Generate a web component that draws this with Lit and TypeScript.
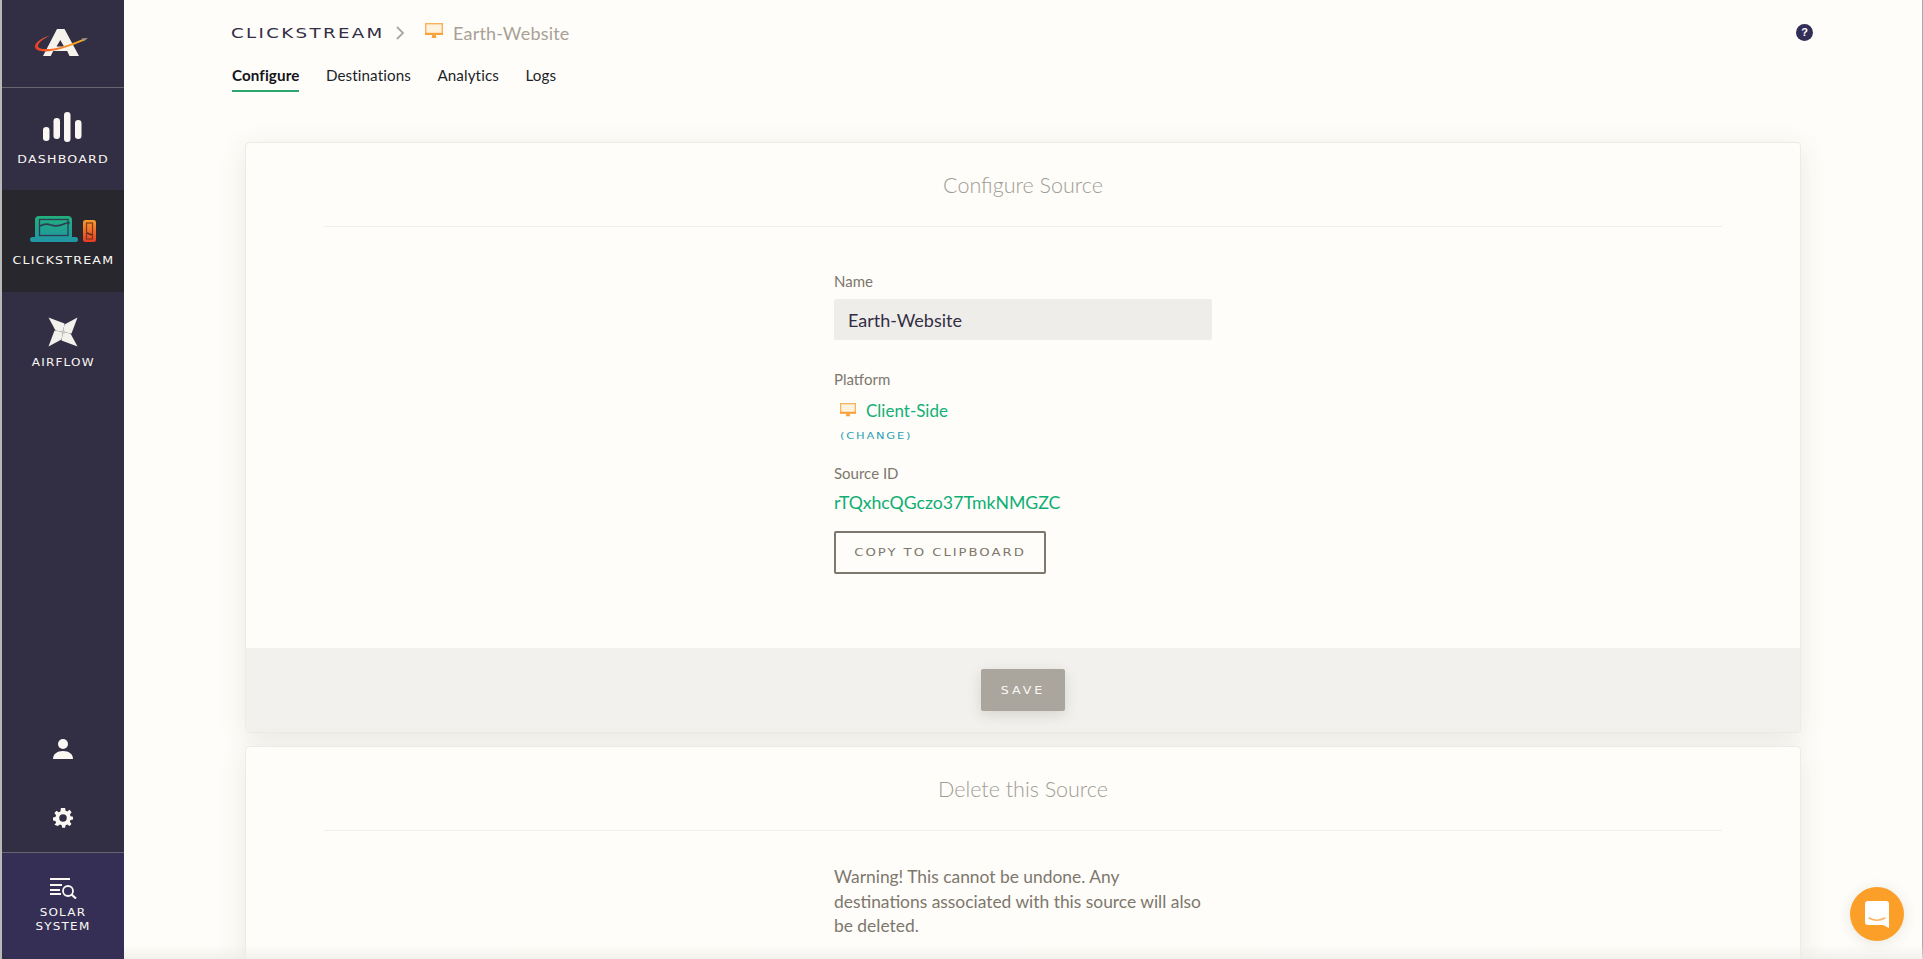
import { LitElement, html, css, svg } from 'lit';
import { customElement } from 'lit/decorators.js';

const monitor = (w: number) => html`<svg width=${w} viewBox="0 0 18 16" fill="none">
  <rect x="0.7" y="0.7" width="16.6" height="10.600" fill="#fff3df" stroke="#fbb05a" stroke-width="1.400"/>
  <rect x="0" y="9.800" width="18" height="2.200" fill="#f7a23b"/>
  <path d="M6.500 15h5l-1-3.500h-3z" fill="#f7a23b"/>
</svg>`;

// one pinwheel blade, drawn around the centre and rotated four times
const blade = (deg: number) =>
  svg`<path transform="translate(15 15) rotate(${deg})" d="M-14.500-14.500 1.500-8.500 0 0-7.500-1.500z" fill="#f3f1ec"/>`;

@customElement('app-root')
export class AppRoot extends LitElement {
  static styles = css`
    :host {
      display: block;
      height: 959px;
      overflow: hidden;
      position: relative;
      background: #fefdf9;
      font-family: "Lato", "Open Sans", sans-serif;
    }

    .page {
      display: flex;
      height: 959px;
      border-left: 2px solid #b9b9ba;
      border-right: 1px solid #a9a9a8;
    }

    .side {
      width: 122px;
      flex: none;
      display: flex;
      flex-direction: column;
      background: #322e44;
      color: #fbf8f4;
    }

    .logo {
      height: 87px;
      display: flex;
      align-items: center;
      justify-content: center;
      border-bottom: 1px solid #67656f;
    }

    .logo svg { margin-bottom: 2px; }

    .nav {
      height: 102px;
      display: flex;
      flex-direction: column;
      align-items: center;
      box-sizing: border-box;
    }

    .nav svg { display: block; }
    .nav.active { background: #29272e; padding-top: 26px; }
    .nav.dash { padding-top: 24px; }
    .nav.air { padding-top: 25px; }

    .cap {
      font-family: "DejaVu Sans", sans-serif;
      font-size: 10.5px;
      letter-spacing: 1px;
      line-height: 12px;
      text-align: center;
      color: #fbf8f4;
      transform: scaleX(1.2);
      margin-top: 11px;
    }

    .active .cap { margin-top: 12px; }
    .air .cap { margin-top: 10px; font-size: 10px; }

    .grow { flex: 1; }

    .small-icon {
      height: 69px;
      display: flex;
      align-items: center;
      justify-content: center;
    }

    .solar {
      height: 107px;
      background: #362f55;
      border-top: 1px solid #67656f;
      border-bottom-left-radius: 8px;
      display: flex;
      flex-direction: column;
      align-items: center;
      padding-top: 25px;
      box-sizing: border-box;
      gap: 7px;
    }

    .solar .cap {
      margin-top: 0;
      line-height: 14px;
      font-size: 10px;
    }

    .main {
      flex: 1;
      min-width: 0;
      padding: 0 121px;
    }

    .head {
      height: 142px;
      box-sizing: border-box;
      margin-left: -14px;
      margin-right: -12px;
      padding-top: 22px;
    }

    .crumbs {
      display: flex;
      align-items: center;
      height: 21px;
    }

    .crumb-root {
      font-family: "DejaVu Sans", sans-serif;
      font-size: 14px;
      letter-spacing: 1.8px;
      color: #322e44;
      width: 165px;
      white-space: nowrap;
      transform: scaleX(1.3);
      transform-origin: left;
      flex: none;
    }

    .crumb-icon { margin: 0 10px 0 20px; display: block; }

    .crumb-name {
      font-size: 18px;
      color: #a8a096;
      letter-spacing: 0.2px;
    }

    .help {
      margin-left: auto;
      width: 17px;
      height: 17px;
      border-radius: 50%;
      background: #322e57;
      color: #fff;
      font: bold 11px/17px "Liberation Sans", sans-serif;
      text-align: center;
    }

    .tabs {
      display: flex;
      gap: 26.5px;
      margin-top: 19px;
      margin-left: 1px;
      font-size: 15.2px;
      color: #211f2a;
    }

    .tab {
      height: 30px;
      line-height: 27px;
      box-sizing: border-box;
      letter-spacing: 0.1px;
    }

    .tab.on {
      font-weight: 700;
      color: #15141b;
      border-bottom: 2px solid #2aa76f;
    }

    .card {
      background: #fefdf9;
      border: 1px solid #ecebe6;
      border-radius: 4px;
      box-shadow: 0 6px 28px rgba(60, 55, 40, 0.1);
      margin-bottom: 13px;
    }

    .title {
      margin: 0 78px;
      height: 83px;
      border-bottom: 1px solid #f0efea;
      text-align: center;
      font-size: 21.5px;
      font-weight: 300;
      line-height: 84px;
      color: #a09c94;
    }

    .form {
      width: 378px;
      margin: 0 auto;
      padding-top: 44px;
      height: 421px;
      box-sizing: border-box;
    }

    .label {
      font-size: 15px;
      line-height: 20px;
      color: #7d776d;
    }

    .input {
      margin-top: 8px;
      height: 41px;
      border-radius: 2px;
      background: #efedea;
      color: #322e44;
      font-size: 18px;
      line-height: 42px;
      padding-left: 14px;
    }

    .platform { margin-top: 29px; }

    .client {
      display: flex;
      align-items: center;
      gap: 10px;
      margin: 10px 0 0 6px;
      height: 22px;
      font-size: 17px;
      color: #12b076;
    }

    .change {
      margin: 9px 0 0 6px;
      font-family: "DejaVu Sans", sans-serif;
      font-size: 9.5px;
      letter-spacing: 1.5px;
      line-height: 12px;
      color: #2a9fb4;
      transform: scaleX(1.2);
      transform-origin: left;
    }

    .sid { margin-top: 21px; }

    .id {
      margin-top: 9px;
      font-size: 17.7px;
      line-height: 22px;
      color: #0fae74;
    }

    .copy {
      margin-top: 17px;
      width: 212px;
      height: 43px;
      box-sizing: border-box;
      border: 2px solid #7d776d;
      border-radius: 2px;
      background: none;
      padding: 0;
    }

    .copy span, .save span {
      display: block;
      font-family: "DejaVu Sans", sans-serif;
      white-space: nowrap;
      transform: scaleX(1.2);
    }

    .copy span {
      font-size: 11px;
      letter-spacing: 1.65px;
      color: #7d776d;
    }

    .foot {
      height: 84px;
      background: #f2f1ed;
      display: flex;
      align-items: center;
      justify-content: center;
      border-radius: 0 0 4px 4px;
    }

    .save {
      width: 84px;
      height: 42px;
      border: none;
      border-radius: 2px;
      background: #aaa69d;
      box-shadow: 0 4px 14px rgba(60, 55, 40, 0.15);
      padding: 0;
    }

    .save span {
      font-size: 10.5px;
      letter-spacing: 2.5px;
      color: #fbf9f5;
    }

    .warn {
      width: 378px;
      margin: 0 auto;
      padding: 34px 0 60px;
      font-size: 17.4px;
      line-height: 24.5px;
      color: #7d776d;
    }

    .launcher {
      position: absolute;
      right: 19px;
      bottom: 18px;
      width: 54px;
      height: 54px;
      border-radius: 50%;
      background: #fb9f28;
      display: flex;
      align-items: center;
      justify-content: center;
      box-shadow: 0 2px 14px rgba(60, 55, 40, 0.12);
    }

    .fade {
      position: absolute;
      left: 124px;
      right: 0;
      bottom: 0;
      height: 14px;
      background: linear-gradient(rgba(236, 235, 230, 0), rgba(236, 235, 230, 0.7));
    }
  `;

  render() {
    return html`
      <div class="page">
        <aside class="side">
          <div class="logo">
            <svg width="75" height="45" viewBox="0 0 75 45">
              <defs>
                <linearGradient id="sw" x1="0" y1="0" x2="1" y2="0"><stop offset="0" stop-color="#ea3b24"/><stop offset="0.4" stop-color="#f3742a"/><stop offset="1" stop-color="#f9b21e"/></linearGradient>
              </defs>
              <path fill-rule="evenodd" d="M31 9h7.500L53 36h-9.500l-2.300-5h-14l-2.500 5H17zM34.300 20l-3.800 6.500h7.500z" fill="#f6f2ec"/>
              <path d="M24 15.500C14 18.500 8.500 23 9 27c.5 4 8 5.500 19 3.500 10-1.800 21-6 30-10l-1-1.500c-10 4-20 8-29 9.500-9 1.300-16 .5-16-2.500 0-3 4-6.500 12-10.500z" fill="url(#sw)"/>
              <path d="M55.500 18.500 62 18l-4.500 3.500z" fill="#a49c88"/>
            </svg>
          </div>
          <div class="nav dash">
            <svg width="40" height="30" viewBox="0 0 40 30" fill="#fbf8f4">
              <rect x="0" y="15" width="6.500" height="14" rx="3.200"/>
              <rect x="10.500" y="6" width="6.500" height="21" rx="3.200"/>
              <rect x="21" y="0" width="6.500" height="30" rx="3.200"/>
              <rect x="32" y="8" width="6.500" height="19" rx="3.200"/>
            </svg>
            <div class="cap">DASHBOARD</div>
          </div>
          <div class="nav active">
            <svg width="66" height="26" viewBox="0 0 66 26">
              <defs>
                <linearGradient id="lap" x1="0" y1="0" x2="0" y2="1"><stop offset="0" stop-color="#22b07a"/><stop offset="1" stop-color="#2095a5"/></linearGradient>
                <linearGradient id="ph" x1="0" y1="0" x2="0" y2="1"><stop offset="0" stop-color="#f79b2c"/><stop offset="1" stop-color="#ea3b24"/></linearGradient>
              </defs>
              <path d="M5 21V4q0-4 4-4h29q4 0 4 4v17h3.500q2.500 0 2.500 2.500T45.500 26h-43Q0 26 0 23.500T2.500 21z" fill="url(#lap)"/>
              <rect x="9.500" y="3.500" width="28.500" height="16" fill="none" stroke="#2f3a55" stroke-width="1.300"/>
              <path d="M10 10q5-3 11-1t13-1 4 0" fill="none" stroke="#2f3a55" stroke-width="1.700"/>
              <rect x="53" y="4" width="13" height="22" rx="2.500" fill="url(#ph)"/>
              <rect x="56.500" y="7" width="6" height="16" fill="none" stroke="#7a3a22" stroke-width="1.200"/>
              <path d="M57 17l5 2" stroke="#5a2a22" stroke-width="1.600"/>
            </svg>
            <div class="cap">CLICKSTREAM</div>
          </div>
          <div class="nav air">
            <svg width="30" height="30" viewBox="0 0 30 30">
              ${[0, 90, 180, 270].map(blade)}
              <circle cx="15" cy="15" r="2" fill="#c9c7c1"/>
            </svg>
            <div class="cap">AIRFLOW</div>
          </div>
          <div class="grow"></div>
          <div class="small-icon">
            <svg width="20" height="20" viewBox="0 0 20 20" fill="#fbf8f4">
              <circle cx="10" cy="5" r="5"/>
              <path d="M0 20c0-5 4-8 10-8s10 3 10 8z"/>
            </svg>
          </div>
          <div class="small-icon">
            <svg width="20" height="20" viewBox="0 0 24 24" fill="#fbf8f4">
              <path fill-rule="evenodd" d="M14.500 0l.6 3.300 2 .8L19.900 2.200 22.300 5l-2 2.700.8 2.200 2.900.6v3.400l-3 .6-.8 2.100 2 2.600-2.300 2.500-2.800-1.900-2 .8-.6 3.200h-3.500l-.6-3.200-2-.8-2.800 1.900L1.700 20.200l2-2.600-.8-2.100-2.900-.6v-3.400l2.900-.6.8-2.200-2-2.700 2.400-2.800 2.800 1.900 2-.8L9.500 0zM12 7.500a4.500 4.500 0 1 0 0 9 4.500 4.500 0 0 0 0-9z"/>
            </svg>
          </div>
          <div class="solar">
            <svg width="27" height="21" viewBox="0 0 27 21" fill="none" stroke="#fbf8f4" stroke-width="1.800">
              <path d="M0 1h20M0 7h12M0 12h10M0 16h11"/>
              <circle cx="18" cy="13" r="5"/>
              <path d="M21.500 16.500l4.500 4" stroke-width="2.200"/>
            </svg>
            <div class="cap">SOLAR<br />SYSTEM</div>
          </div>
        </aside>

        <main class="main">
          <div class="head">
            <div class="crumbs">
              <span class="crumb-root">CLICKSTREAM</span>
              <svg width="9" height="14" viewBox="0 0 9 14" fill="none" stroke="#a9a6ab" stroke-width="1.800"><path d="M1 1l6 6-6 6"/></svg>
              <span class="crumb-icon">${monitor(18)}</span>
              <span class="crumb-name">Earth-Website</span>
              <span class="help">?</span>
            </div>
            <div class="tabs">
              <div class="tab on">Configure</div>
              <div class="tab">Destinations</div>
              <div class="tab">Analytics</div>
              <div class="tab">Logs</div>
            </div>
          </div>

          <section class="card">
            <div class="title">Configure Source</div>
            <div class="form">
              <div class="label">Name</div>
              <div class="input">Earth-Website</div>
              <div class="label platform">Platform</div>
              <div class="client">${monitor(16)}<span>Client-Side</span></div>
              <div class="change">(CHANGE)</div>
              <div class="label sid">Source ID</div>
              <div class="id">rTQxhcQGczo37TmkNMGZC</div>
              <button class="copy"><span>COPY TO CLIPBOARD</span></button>
            </div>
            <div class="foot"><button class="save"><span>SAVE</span></button></div>
          </section>

          <section class="card">
            <div class="title">Delete this Source</div>
            <div class="warn">Warning! This cannot be undone. Any destinations associated with this source will also be deleted.</div>
          </section>
        </main>
      </div>
      <div class="fade"></div>
      <div class="launcher">
        <svg width="24" height="27" viewBox="0 0 24 27">
          <path d="M3 0h18q3 0 3 3v24l-6-3H3q-3 0-3-3V3q0-3 3-3z" fill="#fff"/>
          <path d="M4 17q8 4.500 16 0" fill="none" stroke="#f7b465" stroke-width="1.500" stroke-linecap="round"/>
        </svg>
      </div>
    `;
  }
}
